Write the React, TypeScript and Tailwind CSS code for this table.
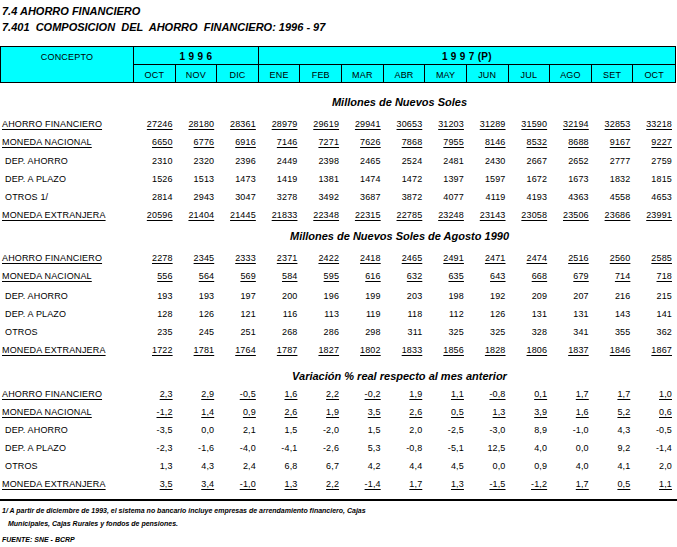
const MONTHS = ["OCT", "NOV", "DIC", "ENE", "FEB", "MAR", "ABR", "MAY", "JUN", "JUL", "AGO", "SET", "OCT"];

type Row = { label: string; values: string[]; main?: boolean; mt?: string };
type Section = { title: string; mt: string; rows: Row[] };

const split = (s: string) => s.trim().split(/\s+/);

const SECTIONS: Section[] = [
  {
    title: "Millones de Nuevos Soles",
    mt: "mt-[10px]",
    rows: [
      { label: "AHORRO FINANCIERO", main: true, mt: "mt-[4px]", values: split("27246 28180 28361 28979 29619 29941 30653 31203 31289 31590 32194 32853 33218") },
      { label: "MONEDA NACIONAL", main: true, values: split("6650 6776 6916 7146 7271 7626 7868 7955 8146 8532 8688 9167 9227") },
      { label: "DEP. AHORRO", mt: "mt-[1px]", values: split("2310 2320 2396 2449 2398 2465 2524 2481 2430 2667 2652 2777 2759") },
      { label: "DEP. A PLAZO", values: split("1526 1513 1473 1419 1381 1474 1472 1397 1597 1672 1673 1832 1815") },
      { label: "OTROS 1/", values: split("2814 2943 3047 3278 3492 3687 3872 4077 4119 4193 4363 4558 4653") },
      { label: "MONEDA EXTRANJERA", main: true, values: split("20596 21404 21445 21833 22348 22315 22785 23248 23143 23058 23506 23686 23991") },
    ],
  },
  {
    title: "Millones de Nuevos Soles de Agosto 1990",
    mt: "mt-[3px]",
    rows: [
      { label: "AHORRO FINANCIERO", main: true, mt: "mt-[4px]", values: split("2278 2345 2333 2371 2422 2418 2465 2491 2471 2474 2516 2560 2585") },
      { label: "MONEDA NACIONAL", main: true, values: split("556 564 569 584 595 616 632 635 643 668 679 714 718") },
      { label: "DEP. AHORRO", mt: "mt-[2px]", values: split("193 193 197 200 196 199 203 198 192 209 207 216 215") },
      { label: "DEP. A PLAZO", values: split("128 126 121 116 113 119 118 112 126 131 131 143 141") },
      { label: "OTROS", values: split("235 245 251 268 286 298 311 325 325 328 341 355 362") },
      { label: "MONEDA EXTRANJERA", main: true, values: split("1722 1781 1764 1787 1827 1802 1833 1856 1828 1806 1837 1846 1867") },
    ],
  },
  {
    title: "Variación % real respecto al mes anterior",
    mt: "mt-[8px]",
    rows: [
      { label: "AHORRO FINANCIERO", main: true, values: split("2,3 2,9 -0,5 1,6 2,2 -0,2 1,9 1,1 -0,8 0,1 1,7 1,7 1,0") },
      { label: "MONEDA NACIONAL", main: true, values: split("-1,2 1,4 0,9 2,6 1,9 3,5 2,6 0,5 1,3 3,9 1,6 5,2 0,6") },
      { label: "DEP. AHORRO", values: split("-3,5 0,0 2,1 1,5 -2,0 1,5 2,0 -2,5 -3,0 8,9 -1,0 4,3 -0,5") },
      { label: "DEP. A PLAZO", values: split("-2,3 -1,6 -4,0 -4,1 -2,6 5,3 -0,8 -5,1 12,5 4,0 0,0 9,2 -1,4") },
      { label: "OTROS", values: split("1,3 4,3 2,4 6,8 6,7 4,2 4,4 4,5 0,0 0,9 4,0 4,1 2,0") },
      { label: "MONEDA EXTRANJERA", main: true, values: split("3,5 3,4 -1,0 1,3 2,2 -1,4 1,7 1,3 -1,5 -1,2 1,7 0,5 1,1") },
    ],
  },
];

function DataRow({ row }: { row: Row }) {
  const ul = row.main ? "underline underline-offset-[2px] decoration-1" : "";
  return (
    <div className={`w-[676px] px-[1px] h-[18px] grid grid-cols-[133px_repeat(13,minmax(0,1fr))] items-center text-[9px] tracking-[0.15px] ${row.mt ?? ""}`}>
      <div className={row.main ? "pl-[1px]" : "pl-[4px]"}>
        <span className={ul}>{row.label}</span>
      </div>
      {row.values.map((v, i) => (
        <div key={i} className="text-right pr-[3px]">
          <span className={ul}>{v}</span>
        </div>
      ))}
    </div>
  );
}

export default function App() {
  return (
    <div className="w-[677px] h-[547px] bg-white text-black overflow-hidden font-['Liberation_Sans',Arial,sans-serif] leading-none">
      {/* titles */}
      <div className="pt-[4px] pl-[2px] font-bold italic text-[11px]">
        <div className="h-[16px] leading-[14px]">7.4 AHORRO FINANCIERO</div>
        <div className="h-[14px] leading-[14px] whitespace-pre">7.401  COMPOSICION  DEL  AHORRO  FINANCIERO: 1996 - 97</div>
      </div>

      {/* header */}
      <div className="mt-[12px] w-[676px] border border-black bg-[#00ffff] grid grid-cols-[133px_repeat(13,minmax(0,1fr))] grid-rows-[18px_17px]">
        <div className="row-span-2 border-r border-black flex justify-center pt-[6px] text-[9px] tracking-[0.2px]">CONCEPTO</div>
        <div className="col-span-3 border-r border-b border-black flex items-center justify-center pt-[3px] text-[10px] font-bold tracking-[0.3px] whitespace-pre">1 9 9 6</div>
        <div className="col-span-10 border-b border-black flex items-center justify-center pt-[3px] text-[10px] font-bold tracking-[0.3px] whitespace-pre">1 9 9 7 (P)</div>
        {MONTHS.map((m, i) => (
          <div key={i} className={`flex items-center justify-center pt-[4px] text-[9px] tracking-[0.2px] ${i < 12 ? "border-r border-black" : ""}`}>
            {m}
          </div>
        ))}
      </div>

      {SECTIONS.map((s, si) => (
        <div key={si}>
          <div className={`h-[18px] pl-[122px] flex items-center justify-center font-bold italic text-[11px] ${s.mt}`}>{s.title}</div>
          {s.rows.map((r, ri) => (
            <DataRow key={ri} row={r} />
          ))}
        </div>
      ))}

      <div className="mt-[6px] h-[2px] w-[677px] bg-black" />

      {/* footnotes */}
      <div className="pl-[2px] font-bold italic text-[7px] leading-[10px]">
        <div className="mt-[5px]">1/ A partir de diciembre de 1993, el sistema no bancario incluye empresas de arrendamiento financiero, Cajas</div>
        <div className="mt-[3px] pl-[6px]">Municipales, Cajas Rurales y fondos de pensiones.</div>
        <div className="mt-[6px]">FUENTE: SNE - BCRP</div>
      </div>
    </div>
  );
}
